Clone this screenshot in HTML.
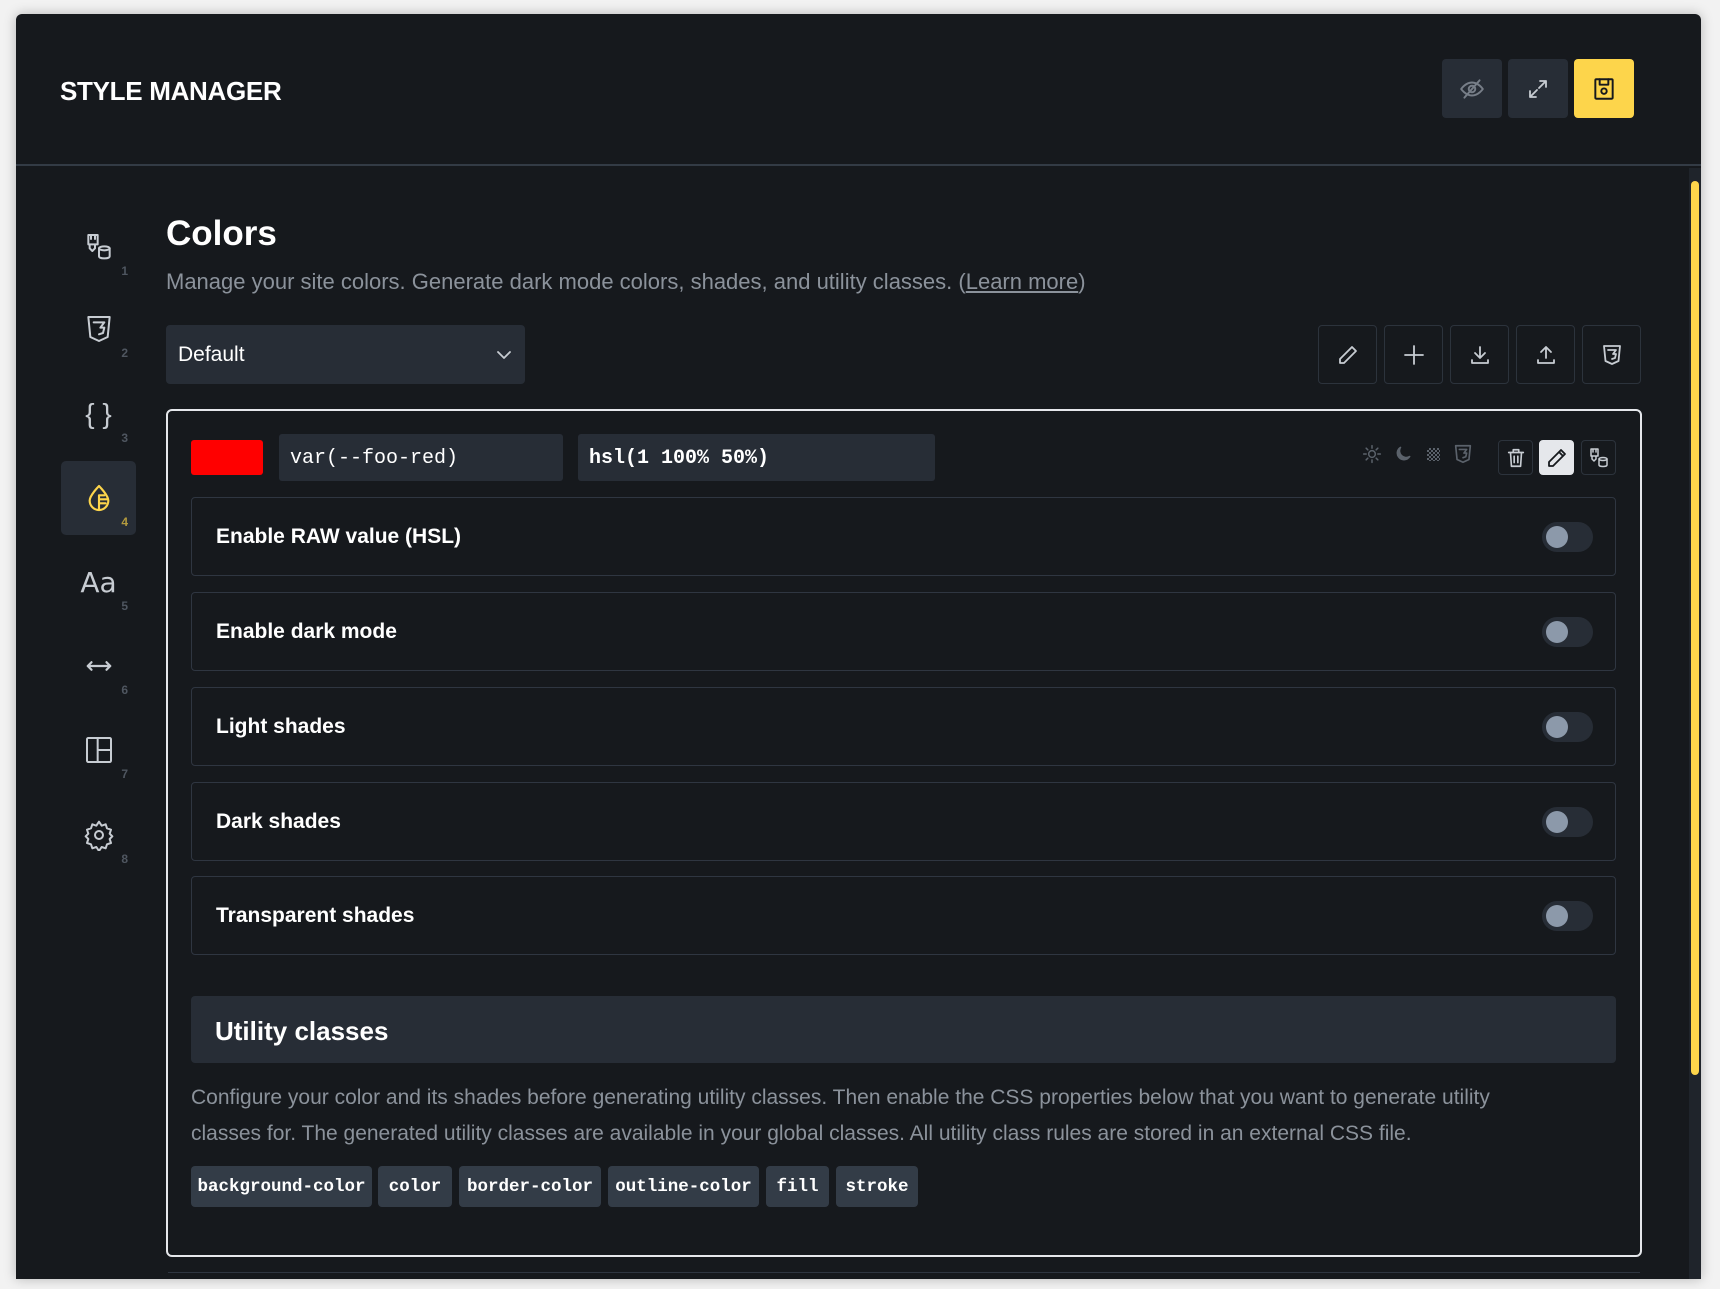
<!DOCTYPE html>
<html><head><meta charset="utf-8"><style>
*{box-sizing:border-box;margin:0;padding:0}
body{width:1720px;height:1289px;background:#f2f2f2;font-family:"Liberation Sans",sans-serif;position:relative;overflow:hidden}
.a{position:absolute}
.panel{left:16px;top:14px;width:1685px;height:1265px;background:#16191d;border-radius:6px 6px 0 0;box-shadow:0 0 12px rgba(0,0,0,.25);overflow:hidden}
.hb{width:60px;height:59px;border-radius:4px;background:#272d36;display:flex;align-items:center;justify-content:center}
.sq{width:59px;height:59px;border:1px solid #2c333c;border-radius:4px;display:flex;align-items:center;justify-content:center}
.row{left:191px;width:1425px;height:79px;border:1px solid #2f3641;border-radius:4px}
.row span{position:absolute;left:24px;top:27px;color:#fff;font-size:21px;font-weight:bold}
.tg{position:absolute;left:1350px;top:24px;width:51px;height:30px;border-radius:15px;background:#272d36}
.tg:after{content:"";position:absolute;left:4px;top:4px;width:22px;height:22px;border-radius:50%;background:#8c99aa}
.tag{top:1166px;height:41px;background:#333c47;border-radius:4px;color:#fff;font:bold 17.5px "Liberation Mono",monospace;display:flex;align-items:center;justify-content:center}
.si{left:61px;width:75px;height:74px;display:flex;align-items:center;justify-content:center}
.si b{position:absolute;right:8px;bottom:6px;font-size:12px;color:#4f5660}
svg{fill:none;stroke:#c7ccd2;stroke-width:1.8;stroke-linecap:round;stroke-linejoin:round}
.ib{width:35px;height:35px;border:1px solid #2c333c;border-radius:4px;display:flex;align-items:center;justify-content:center}
</style></head><body>
<div class="a panel"></div>
<div class="a" style="left:60px;top:76px;color:#fff;font-size:26px;font-weight:bold;letter-spacing:-.3px">STYLE MANAGER</div>
<div class="a hb" style="left:1442px;top:59px"><svg width="26" height="26" viewBox="0 0 24 24" style="stroke:#777e88"><path d="M2 12s4-6 10-6 10 6 10 6-4 6-10 6S2 12 2 12z"/><circle cx="12" cy="12" r="3"/><path d="M5 20L19 4"/></svg></div>
<div class="a hb" style="left:1508px;top:59px"><svg width="24" height="24" viewBox="0 0 24 24"><path d="M14 4h6v6M20 4l-7 7M10 20H4v-6M4 20l7-7"/></svg></div>
<div class="a hb" style="left:1574px;top:59px;background:#fdd54b"><svg width="26" height="26" viewBox="0 0 24 24" style="stroke:#16191d"><rect x="4" y="3" width="16" height="18" rx="1"/><path d="M8 3v5h8V3"/><circle cx="12" cy="14" r="2.5"/></svg></div>
<div class="a" style="left:16px;top:164px;width:1685px;height:2px;background:#333b45"></div>
<div class="a" style="left:1689px;top:168px;width:12px;height:1111px;background:#1f242b"></div>
<div class="a" style="left:1691px;top:181px;width:8px;height:894px;background:#fdd54b;border-radius:4px"></div>

<div class="a si" style="top:210px"><svg width="32" height="32" viewBox="0 0 24 24" style="stroke-width:1.5"><path d="M4 3h7v7H4zM6 3v3M9 3v3M5 10v3l2 2 2-2v-3"/><ellipse cx="16" cy="13" rx="4" ry="1.5"/><path d="M12 13v6c0 1 2 1.5 4 1.5s4-.5 4-1.5v-6"/></svg><b>1</b></div>
<div class="a si" style="top:292px"><svg width="32" height="32" viewBox="0 0 24 24" style="stroke-width:1.5"><path d="M4 3h16l-1.5 15L12 21l-6.5-3z"/><path d="M8 7h8l-3 4h3l-1 4-3 1"/></svg><b>2</b></div>
<div class="a si" style="top:377px"><span style="color:#c7ccd2;font-size:28px">{ }</span><b>3</b></div>
<div class="a si" style="top:461px;background:#272d36;border-radius:5px"><svg width="32" height="32" viewBox="0 0 24 24" style="stroke:#fdd54b;stroke-width:1.6"><path d="M12 3s-7 7-7 11a7 7 0 0014 0c0-4-7-11-7-11z"/><path d="M12 10h4M12 13h6M12 16h5M12 10v10"/></svg><b style="color:#b39a3e">4</b></div>
<div class="a si" style="top:545px"><span style="color:#c7ccd2;font-size:28px;font-family:'DejaVu Sans'">Aa</span><b>5</b></div>
<div class="a si" style="top:629px"><svg width="32" height="30" viewBox="0 0 24 24"><path d="M3 12h18M6 9l-3 3 3 3M18 9l3 3-3 3"/></svg><b>6</b></div>
<div class="a si" style="top:713px"><svg width="32" height="32" viewBox="0 0 24 24" style="stroke-width:1.5"><rect x="3" y="3" width="18" height="18" rx="1"/><path d="M11 3v18M11 12h10"/></svg><b>7</b></div>
<div class="a si" style="top:798px"><svg width="32" height="32" viewBox="0 0 24 24" style="stroke-width:1.5"><circle cx="12" cy="12" r="3"/><path d="M12 2l2 3 3-1 1 3 3 1-1 3 2 2-2 2 1 3-3 1-1 3-3-1-2 3-2-3-3 1-1-3-3-1 1-3-2-2 2-2-1-3 3-1 1-3 3 1z"/></svg><b>8</b></div>

<div class="a" style="left:166px;top:214px;color:#fff;font-size:35px;font-weight:bold">Colors</div>
<div class="a" style="left:166px;top:269px;color:#8b929b;font-size:22px">Manage your site colors. Generate dark mode colors, shades, and utility classes. (<u>Learn more</u>)</div>
<div class="a" style="left:166px;top:325px;width:359px;height:59px;background:#272d36;border-radius:4px"><span class="a" style="left:12px;top:18px;color:#fff;font-size:21px">Default</span><svg class="a" style="left:330px;top:24px" width="16" height="12" viewBox="0 0 16 12"><path d="M2 3l6 6 6-6"/></svg></div>
<div class="a sq" style="left:1318px;top:325px"><svg width="24" height="24" viewBox="0 0 24 24"><path d="M16 4l4 4L8 20H4v-4z"/></svg></div>
<div class="a sq" style="left:1384px;top:325px"><svg width="24" height="24" viewBox="0 0 24 24"><path d="M12 3v18M3 12h18"/></svg></div>
<div class="a sq" style="left:1450px;top:325px"><svg width="24" height="24" viewBox="0 0 24 24"><path d="M12 4v11M7 10l5 5 5-5M4 17v3h16v-3"/></svg></div>
<div class="a sq" style="left:1516px;top:325px"><svg width="24" height="24" viewBox="0 0 24 24"><path d="M12 15V4M7 9l5-5 5 5M4 17v3h16v-3"/></svg></div>
<div class="a sq" style="left:1582px;top:325px"><svg width="24" height="24" viewBox="0 0 24 24"><path d="M4 3h16l-1.5 15L12 21l-6.5-3z"/><path d="M8 7h8l-3 4h3l-1 4-3 1"/></svg></div>

<div class="a" style="left:166px;top:409px;width:1476px;height:848px;border:2px solid #e5e7eb;border-radius:6px"></div>
<div class="a" style="left:191px;top:440px;width:72px;height:35px;background:#ff0000;border-radius:3px"></div>
<div class="a" style="left:279px;top:434px;width:284px;height:47px;background:#272d36;border-radius:3px;color:#fff;font:20px 'Liberation Mono',monospace;padding:13px 11px">var(--foo-red)</div>
<div class="a" style="left:578px;top:434px;width:357px;height:47px;background:#272d36;border-radius:3px;color:#fff;font:bold 20px 'Liberation Mono',monospace;padding:13px 11px">hsl(1 100% 50%)</div>
<svg class="a" style="left:1362px;top:444px;stroke:#5b626b" width="20" height="20" viewBox="0 0 24 24"><circle cx="12" cy="12" r="4"/><path d="M12 2v3M12 19v3M2 12h3M19 12h3M5 5l2 2M17 17l2 2M5 19l2-2M17 7l2-2"/></svg>
<svg class="a" style="left:1393px;top:444px" width="20" height="20" viewBox="0 0 24 24"><path d="M20 15A8 8 0 019 4a8 8 0 1011 11z" style="fill:#5b626b;stroke:#5b626b"/></svg>
<div class="a" style="left:1427px;top:448px;width:13px;height:13px;background:repeating-conic-gradient(#5b626b 0 25%,transparent 0 50%) 0 0/4px 4px"></div>
<svg class="a" style="left:1452px;top:443px;stroke:#5b626b" width="22" height="22" viewBox="0 0 24 24"><path d="M4 3h16l-1.5 15L12 21l-6.5-3z"/><path d="M8 7h8l-3 4h3l-1 4-3 1"/></svg>
<div class="a ib" style="left:1498px;top:440px"><svg width="22" height="22" viewBox="0 0 24 24"><path d="M4 6h16M9 6V3h6v3M6 6l1 15h10l1-15M10 10v7M14 10v7"/></svg></div>
<div class="a ib" style="left:1539px;top:440px;background:#e5e7eb;border-color:#e5e7eb"><svg width="24" height="24" viewBox="0 0 24 24" style="stroke:#16191d"><path d="M16 4l4 4L8 20H4v-4zM14 6l4 4"/></svg></div>
<div class="a ib" style="left:1581px;top:440px"><svg width="24" height="24" viewBox="0 0 24 24" style="stroke-width:1.5"><path d="M4 3h7v7H4zM6 3v3M9 3v3M5 10v3l2 2 2-2v-3"/><ellipse cx="16" cy="13" rx="4" ry="1.5"/><path d="M12 13v6c0 1 2 1.5 4 1.5s4-.5 4-1.5v-6"/></svg></div>

<div class="a row" style="top:497px"><span>Enable RAW value (HSL)</span><div class="tg"></div></div>
<div class="a row" style="top:592px"><span>Enable dark mode</span><div class="tg"></div></div>
<div class="a row" style="top:687px"><span>Light shades</span><div class="tg"></div></div>
<div class="a row" style="top:782px"><span>Dark shades</span><div class="tg"></div></div>
<div class="a row" style="top:876px"><span>Transparent shades</span><div class="tg"></div></div>

<div class="a" style="left:191px;top:996px;width:1425px;height:67px;background:#272d36;border-radius:4px"><span class="a" style="left:24px;top:20px;color:#fff;font-size:26px;font-weight:bold">Utility classes</span></div>
<div class="a" style="left:191px;top:1080px;width:1310px;color:#8b929b;font-size:21px;line-height:36px">Configure your color and its shades before generating utility classes. Then enable the CSS properties below that you want to generate utility classes for. The generated utility classes are available in your global classes. All utility class rules are stored in an external CSS file.</div>
<div class="a tag" style="left:191px;width:181px">background-color</div>
<div class="a tag" style="left:378px;width:74px">color</div>
<div class="a tag" style="left:459px;width:142px">border-color</div>
<div class="a tag" style="left:608px;width:151px">outline-color</div>
<div class="a tag" style="left:766px;width:63px">fill</div>
<div class="a tag" style="left:836px;width:82px">stroke</div>
<div class="a" style="left:168px;top:1272px;width:1472px;height:1px;background:#2f3641"></div>
</body></html>
